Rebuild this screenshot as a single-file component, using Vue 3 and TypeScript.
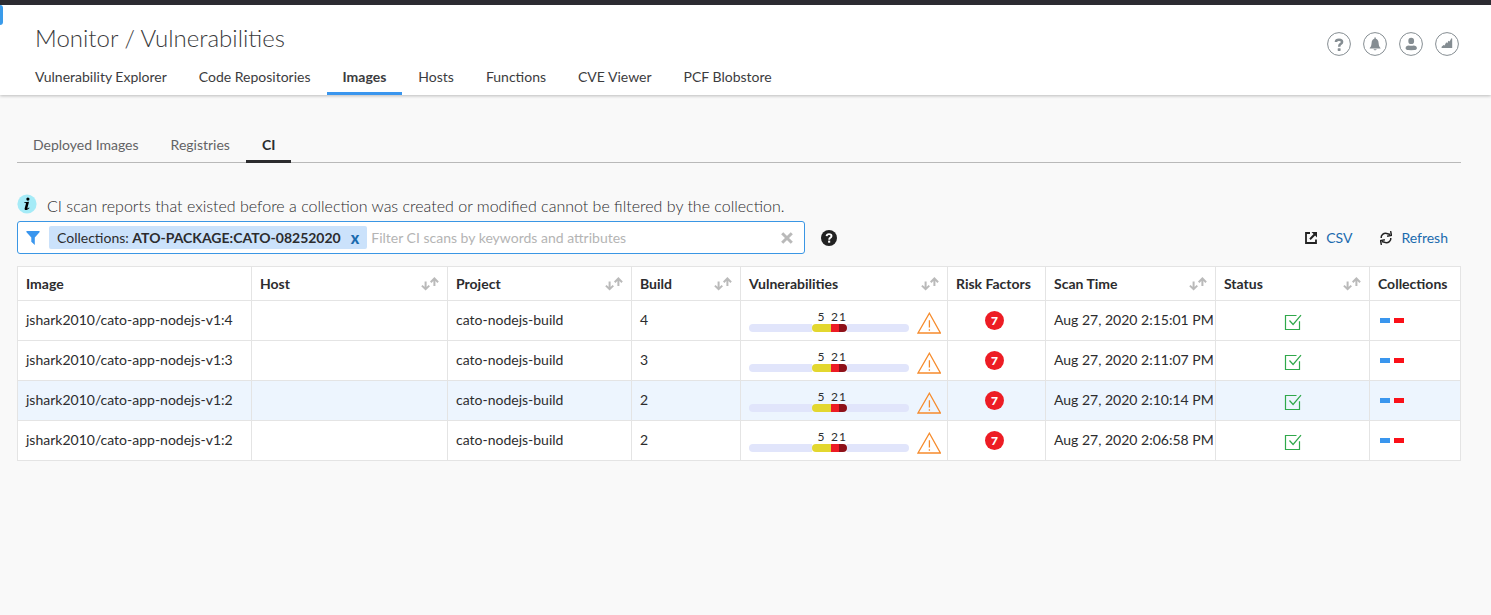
<script setup lang="ts">
import { ref } from 'vue'

interface Column {
  key: string
  label: string
  sortable: boolean
}

interface Scan {
  id: number
  image: string
  host: string
  project: string
  build: string
  risk: number
  time: string
}

const mainTabs = ['Vulnerability Explorer', 'Code Repositories', 'Images', 'Hosts', 'Functions', 'CVE Viewer', 'PCF Blobstore']
const subTabs = ['Deployed Images', 'Registries', 'CI']
const activeMain = ref('Images')
const activeSub = ref('CI')
const query = ref('')

const columns: Column[] = [
  { key: 'image', label: 'Image', sortable: false },
  { key: 'host', label: 'Host', sortable: true },
  { key: 'project', label: 'Project', sortable: true },
  { key: 'build', label: 'Build', sortable: true },
  { key: 'vulns', label: 'Vulnerabilities', sortable: true },
  { key: 'risk', label: 'Risk Factors', sortable: false },
  { key: 'time', label: 'Scan Time', sortable: true },
  { key: 'status', label: 'Status', sortable: true },
  { key: 'collections', label: 'Collections', sortable: false },
]

const severities = [
  { level: 'medium', count: 5 },
  { level: 'high', count: 2 },
  { level: 'critical', count: 1 },
]

const scans: Scan[] = [
  { id: 1, image: 'jshark2010/cato-app-nodejs-v1:4', host: '', project: 'cato-nodejs-build', build: '4', risk: 7, time: 'Aug 27, 2020 2:15:01 PM' },
  { id: 2, image: 'jshark2010/cato-app-nodejs-v1:3', host: '', project: 'cato-nodejs-build', build: '3', risk: 7, time: 'Aug 27, 2020 2:11:07 PM' },
  { id: 3, image: 'jshark2010/cato-app-nodejs-v1:2', host: '', project: 'cato-nodejs-build', build: '2', risk: 7, time: 'Aug 27, 2020 2:10:14 PM' },
  { id: 4, image: 'jshark2010/cato-app-nodejs-v1:2', host: '', project: 'cato-nodejs-build', build: '2', risk: 7, time: 'Aug 27, 2020 2:06:58 PM' },
]
const selected = ref(3)
</script>

<template>
  <div class="page">
    <header class="header">
      <span class="drawer-handle"></span>
      <div class="header-top">
        <h1>Monitor / Vulnerabilities</h1>
        <div class="actions">
          <button type="button" aria-label="Help">
            <svg viewBox="0 0 24 24" width="24" height="24"><circle cx="12" cy="12" r="11.4" class="ring" /><path d="M8.9 10Q9 7.7 12 7.7Q15.1 7.7 15.1 10Q15.1 11.3 13.4 12.2Q12.2 12.9 12.2 14.7" class="mark" /><rect x="10.7" y="16.2" width="2.9" height="2.7" rx=".6" /></svg>
          </button>
          <button type="button" aria-label="Alerts">
            <svg viewBox="0 0 24 24" width="24" height="24"><circle cx="12" cy="12" r="11.4" class="ring" /><path d="M11.4 5.6h1.4v1.2c1.8.5 2.6 1.9 2.8 4.1.2 2.4.6 3.8 1.9 5v.7H6.7v-.7c1.3-1.2 1.7-2.6 1.9-5 .2-2.2 1-3.6 2.8-4.1z" /><path d="M10.6 17.3h3c0 1.3-3 1.3-3 0z" /></svg>
          </button>
          <button type="button" aria-label="Account">
            <svg viewBox="0 0 24 24" width="24" height="24"><circle cx="12" cy="12" r="11.4" class="ring" /><ellipse cx="12.2" cy="8.9" rx="2.9" ry="3.2" /><path d="M6.6 16.3c0-2 1.3-2.9 3.2-2.9 1.6.6 3.2.6 4.8 0 1.9 0 3.3.9 3.3 2.9 0 1.2-1.2 1.7-2.5 1.8a40 40 0 0 1-6.3 0c-1.4-.1-2.5-.6-2.5-1.8z" /></svg>
          </button>
          <button type="button" aria-label="Statistics">
            <svg viewBox="0 0 24 24" width="24" height="24"><circle cx="12" cy="12" r="11.4" class="ring" /><path d="M6.6 16v-1.2l2-1.9 1 .6 1.6-3.3 1.1 1 1.1-2.5 1.2.8 1.8-3.3.8.2V16z" /></svg>
          </button>
        </div>
      </div>
      <nav class="main-tabs" aria-label="Vulnerabilities">
        <a v-for="tab in mainTabs" :key="tab" href="#" :class="{ active: tab === activeMain }" @click.prevent="activeMain = tab">{{ tab }}</a>
      </nav>
    </header>

    <main class="content">
      <nav class="sub-tabs" aria-label="Images">
        <a v-for="tab in subTabs" :key="tab" href="#" :class="{ active: tab === activeSub }" @click.prevent="activeSub = tab">{{ tab }}</a>
      </nav>

      <p class="notice">
        <svg viewBox="0 0 20 20" width="20" height="20" aria-hidden="true"><circle cx="10" cy="10" r="9.6" fill="#a5ebf7" /><circle cx="10.9" cy="5.1" r="1.6" /><path d="M7.4 8.2l4.6-.4-1.6 6.2c-.1.7.5.6 1.6-.4l.5.5c-1.5 1.6-2.4 2-3.5 2-1.3 0-1.6-.8-1.3-1.9l1.3-4.7c0-.5-.4-.6-1.7-.6z" /></svg>
        <span>CI scan reports that existed before a collection was created or modified cannot be filtered by the collection.</span>
      </p>

      <div class="toolbar">
        <div class="filter">
          <svg class="funnel" viewBox="0 0 14 14" width="14" height="14" aria-hidden="true"><path d="M.4 0h13.2l-.1 1.2L8.8 6.5V14L5.3 10.7V6.5L.5 1.2z" /></svg>
          <span class="chip"><span>Collections: <b>ATO-PACKAGE:CATO-08252020</b></span><button type="button" aria-label="Remove collection filter">x</button></span>
          <input v-model="query" type="text" aria-label="Filter CI scans" placeholder="Filter CI scans by keywords and attributes" />
          <button type="button" class="clear" aria-label="Clear filters">
            <svg viewBox="0 0 12 12" width="12" height="12"><path d="M1.2 1.2l9.6 9.6M10.8 1.2l-9.6 9.6" /></svg>
          </button>
        </div>
        <button type="button" class="help" aria-label="Filter help">
          <svg viewBox="0 0 16 16" width="16" height="16"><circle cx="8" cy="8" r="8" fill="#222" /><path d="M5.6 6.1Q5.7 4.1 8 4.1Q10.5 4.1 10.5 6Q10.5 7.1 9.2 7.8Q8.2 8.4 8.2 9.7" fill="none" stroke="#fff" stroke-width="1.9" /><rect x="7.1" y="10.6" width="2.1" height="2.1" fill="#fff" /></svg>
        </button>
        <div class="links">
          <a href="#">
            <svg viewBox="0 0 12 12" width="12" height="12" aria-hidden="true"><path d="M5 1H1v10h10V7.4" fill="none" stroke="#222" stroke-width="1.8" /><path d="M6.4 0H12v5.4l-1.9-1.8-4.4 4.3-1.4-1.4 4.3-4.4z" fill="#222" /></svg>
            CSV
          </a>
          <a href="#">
            <svg viewBox="0 0 12 14" width="12" height="14" aria-hidden="true"><path d="M1.2 7C.8 3.9 3.6 2 6.6 2.4L10.4 3.4M10.8 7C11.2 10.1 8.4 12 5.4 11.6L1.6 10.6" fill="none" stroke="#222" stroke-width="1.5" /><path d="M10.6 0l.9 4.4-4.4.9M1.4 14L.5 9.6l4.4-.9" fill="none" stroke="#222" stroke-width="1.4" /></svg>
            Refresh
          </a>
        </div>
      </div>

      <table class="scans">
        <colgroup><col v-for="c in columns" :key="c.key" :class="'col-' + c.key" /></colgroup>
        <thead>
          <tr>
            <th v-for="c in columns" :key="c.key" scope="col">
              <div class="head">
                {{ c.label }}
                <button v-if="c.sortable" type="button" :aria-label="'Sort by ' + c.label">
                  <svg viewBox="0 0 18 14" width="18" height="14"><path d="M4.6 4.5v7M.9 8.6l3.7 3.6 3.7-3.6M13.4 9V2M9.7 5.2l3.7-3.7 3.7 3.7" /></svg>
                </button>
              </div>
            </th>
          </tr>
        </thead>
        <tbody>
          <tr v-for="s in scans" :key="s.id" :class="{ selected: s.id === selected }">
            <td>{{ s.image }}</td>
            <td>{{ s.host }}</td>
            <td>{{ s.project }}</td>
            <td>{{ s.build }}</td>
            <td>
              <div class="vulns">
                <div class="meter">
                  <span class="track"></span>
                  <span v-for="v in severities" :key="v.level" class="segment" :class="v.level"><span>{{ v.count }}</span></span>
                  <span class="track"></span>
                </div>
                <svg viewBox="0 0 24 22" width="24" height="22" aria-label="Warning"><path d="M12.4 1.2L23.4 21H1z" /><path d="M12.4 8.3v7.2M12.4 17.2v1.6" /></svg>
              </div>
            </td>
            <td class="center"><span class="risk">{{ s.risk }}</span></td>
            <td>{{ s.time }}</td>
            <td class="center">
              <svg class="check" viewBox="0 0 18 16" width="18" height="16" aria-label="Passed"><path d="M12.5 1.5H1.5v14h14V7.2" /><path d="M5.5 6.5l3.6 4L17 1.2" /></svg>
            </td>
            <td><span class="swatches"><i class="blue"></i><i class="red"></i></span></td>
          </tr>
        </tbody>
      </table>
    </main>
  </div>
</template>

<style>
body {
  background: #f9f9f9;
}
</style>

<style scoped>
.page {
  color: #2c2c2e;
  font: 14px/20px Lato, "Open Sans", sans-serif;
}
button {
  border: 0;
  padding: 0;
  background: none;
  font: inherit;
  cursor: pointer;
}
svg {
  display: block;
  flex: none;
}
a {
  text-decoration: none;
}
.header {
  position: relative;
  border-top: 5px solid #2c2b31;
  background: #fff;
  box-shadow: 0 1px 3px rgba(0, 0, 0, 0.25);
}
.drawer-handle {
  position: absolute;
  left: 0;
  top: 0;
  width: 3px;
  height: 20px;
  border-radius: 0 4px 4px 0;
  background: #3a9bea;
}
.header-top {
  display: flex;
  justify-content: space-between;
  padding: 18px 32px 0 35px;
}
h1 {
  margin: 0;
  font-size: 24px;
  line-height: 30px;
  font-weight: 300;
  color: #3a3a3c;
}
.actions {
  display: flex;
  gap: 12px;
  padding-top: 9px;
}
.actions svg {
  fill: #858d92;
}
.actions .ring {
  fill: none;
  stroke: #858d92;
}
.actions .mark {
  fill: none;
  stroke: #858d92;
  stroke-width: 2.5;
}
.main-tabs,
.sub-tabs {
  display: flex;
}
.main-tabs {
  margin-top: 4px;
  padding-left: 19px;
}
.main-tabs a,
.sub-tabs a {
  padding: 7px 16px 5px;
  border-bottom: 3px solid transparent;
  color: #3c3c3e;
}
.main-tabs a.active {
  border-color: #3a96ee;
  font-weight: 700;
}
.content {
  padding: 37px 30px 0 17px;
}
.sub-tabs {
  border-bottom: 1px solid #b9b9b9;
}
.sub-tabs a {
  margin-bottom: -1px;
  padding: 3px 16px 5px;
  color: #636365;
}
.sub-tabs a.active {
  border-color: #2c2c2e;
  color: #2c2c2e;
  font-weight: 700;
}
.notice {
  display: flex;
  align-items: flex-start;
  gap: 10px;
  margin: 31px 0 0;
  font-size: 16px;
  line-height: 24px;
  font-weight: 300;
}
.toolbar {
  display: flex;
  align-items: center;
  margin: 3px 0 12px;
}
.filter {
  display: flex;
  align-items: center;
  box-sizing: border-box;
  width: 788px;
  height: 33px;
  padding: 0 11px 0 8px;
  border: 1px solid #3a96e4;
  border-radius: 3px;
  background: #fff;
}
.funnel {
  fill: #3a96ee;
}
.chip {
  display: flex;
  margin-left: 9px;
  padding: 2px 8px 1px;
  border-radius: 2px;
  background: #cbe2fb;
  white-space: nowrap;
}
.chip button {
  margin-left: 10px;
  color: #1b6bae;
  font-size: 16px;
  font-weight: 900;
}
.filter input {
  flex: 1;
  min-width: 0;
  padding: 0 4px;
  border: 0;
  outline: 0;
  background: none;
  font: inherit;
}
.filter input::placeholder {
  color: #b4b4b4;
  opacity: 1;
}
.clear path {
  stroke: #b9b9b9;
  stroke-width: 3;
}
.help {
  margin-left: 16px;
}
.links {
  display: flex;
  gap: 28px;
  margin-left: auto;
  padding-right: 13px;
}
.links a {
  display: flex;
  align-items: center;
  gap: 9px;
  color: #1b6bae;
}
.scans {
  width: 100%;
  table-layout: fixed;
  border-collapse: collapse;
  background: #fff;
}
.col-image { width: 234px; }
.col-project { width: 184px; }
.col-build { width: 109px; }
.col-vulns { width: 207px; }
.col-risk { width: 98px; }
.col-time { width: 170px; }
.col-status { width: 154px; }
.col-collections { width: 91px; }
th,
td {
  padding: 0 0 0 8px;
  border: 1px solid #e4e4e4;
  white-space: nowrap;
  text-align: left;
}
th {
  height: 33px;
}
td {
  height: 37px;
  padding-bottom: 2px;
}
.head {
  display: flex;
  align-items: center;
  justify-content: space-between;
  padding-right: 8px;
}
.head path {
  fill: none;
  stroke: #bababa;
  stroke-width: 2;
}
.selected {
  background: #edf5fe;
}
.vulns {
  display: flex;
  align-items: flex-end;
  gap: 8px;
  padding: 6px 6px 0 0;
}
.meter {
  display: flex;
  align-items: flex-end;
  flex: 1;
  margin-bottom: 2px;
}
.track,
.segment {
  height: 8px;
}
.track {
  flex: 1;
  background: #e1e5fb;
}
.track:first-child {
  border-radius: 4px 0 0 4px;
}
.track:last-child {
  border-radius: 0 4px 4px 0;
}
.segment {
  display: flex;
  flex-direction: column-reverse;
  align-items: center;
  width: 8px;
  font-size: 12px;
  line-height: 12px;
}
.segment span {
  margin-bottom: 9px;
}
.medium {
  width: 19px;
  border-radius: 4px 0 0 4px;
  background: #e3d72f;
}
.high {
  background: #ed1c24;
}
.critical {
  border-radius: 0 4px 4px 0;
  background: #8e1119;
}
.vulns svg path {
  fill: none;
  stroke: #f68b2c;
  stroke-width: 1.3;
}
.center {
  padding-left: 0;
  text-align: center;
}
.risk {
  display: inline-block;
  width: 19px;
  height: 19px;
  margin-right: 4px;
  border-radius: 10px;
  background: #ed1c24;
  color: #fff;
  font-size: 12px;
  line-height: 19px;
  font-weight: 900;
  vertical-align: middle;
}
.check {
  margin: 5px auto 0;
}
.check path {
  fill: none;
  stroke: #2fa84a;
  stroke-width: 1.2;
}
.swatches {
  display: flex;
  gap: 4px;
  padding: 2px 0 0 2px;
}
.swatches i {
  width: 10px;
  height: 5px;
}
.blue {
  background: #3a96ee;
}
.red {
  background: #fb1018;
}
</style>
